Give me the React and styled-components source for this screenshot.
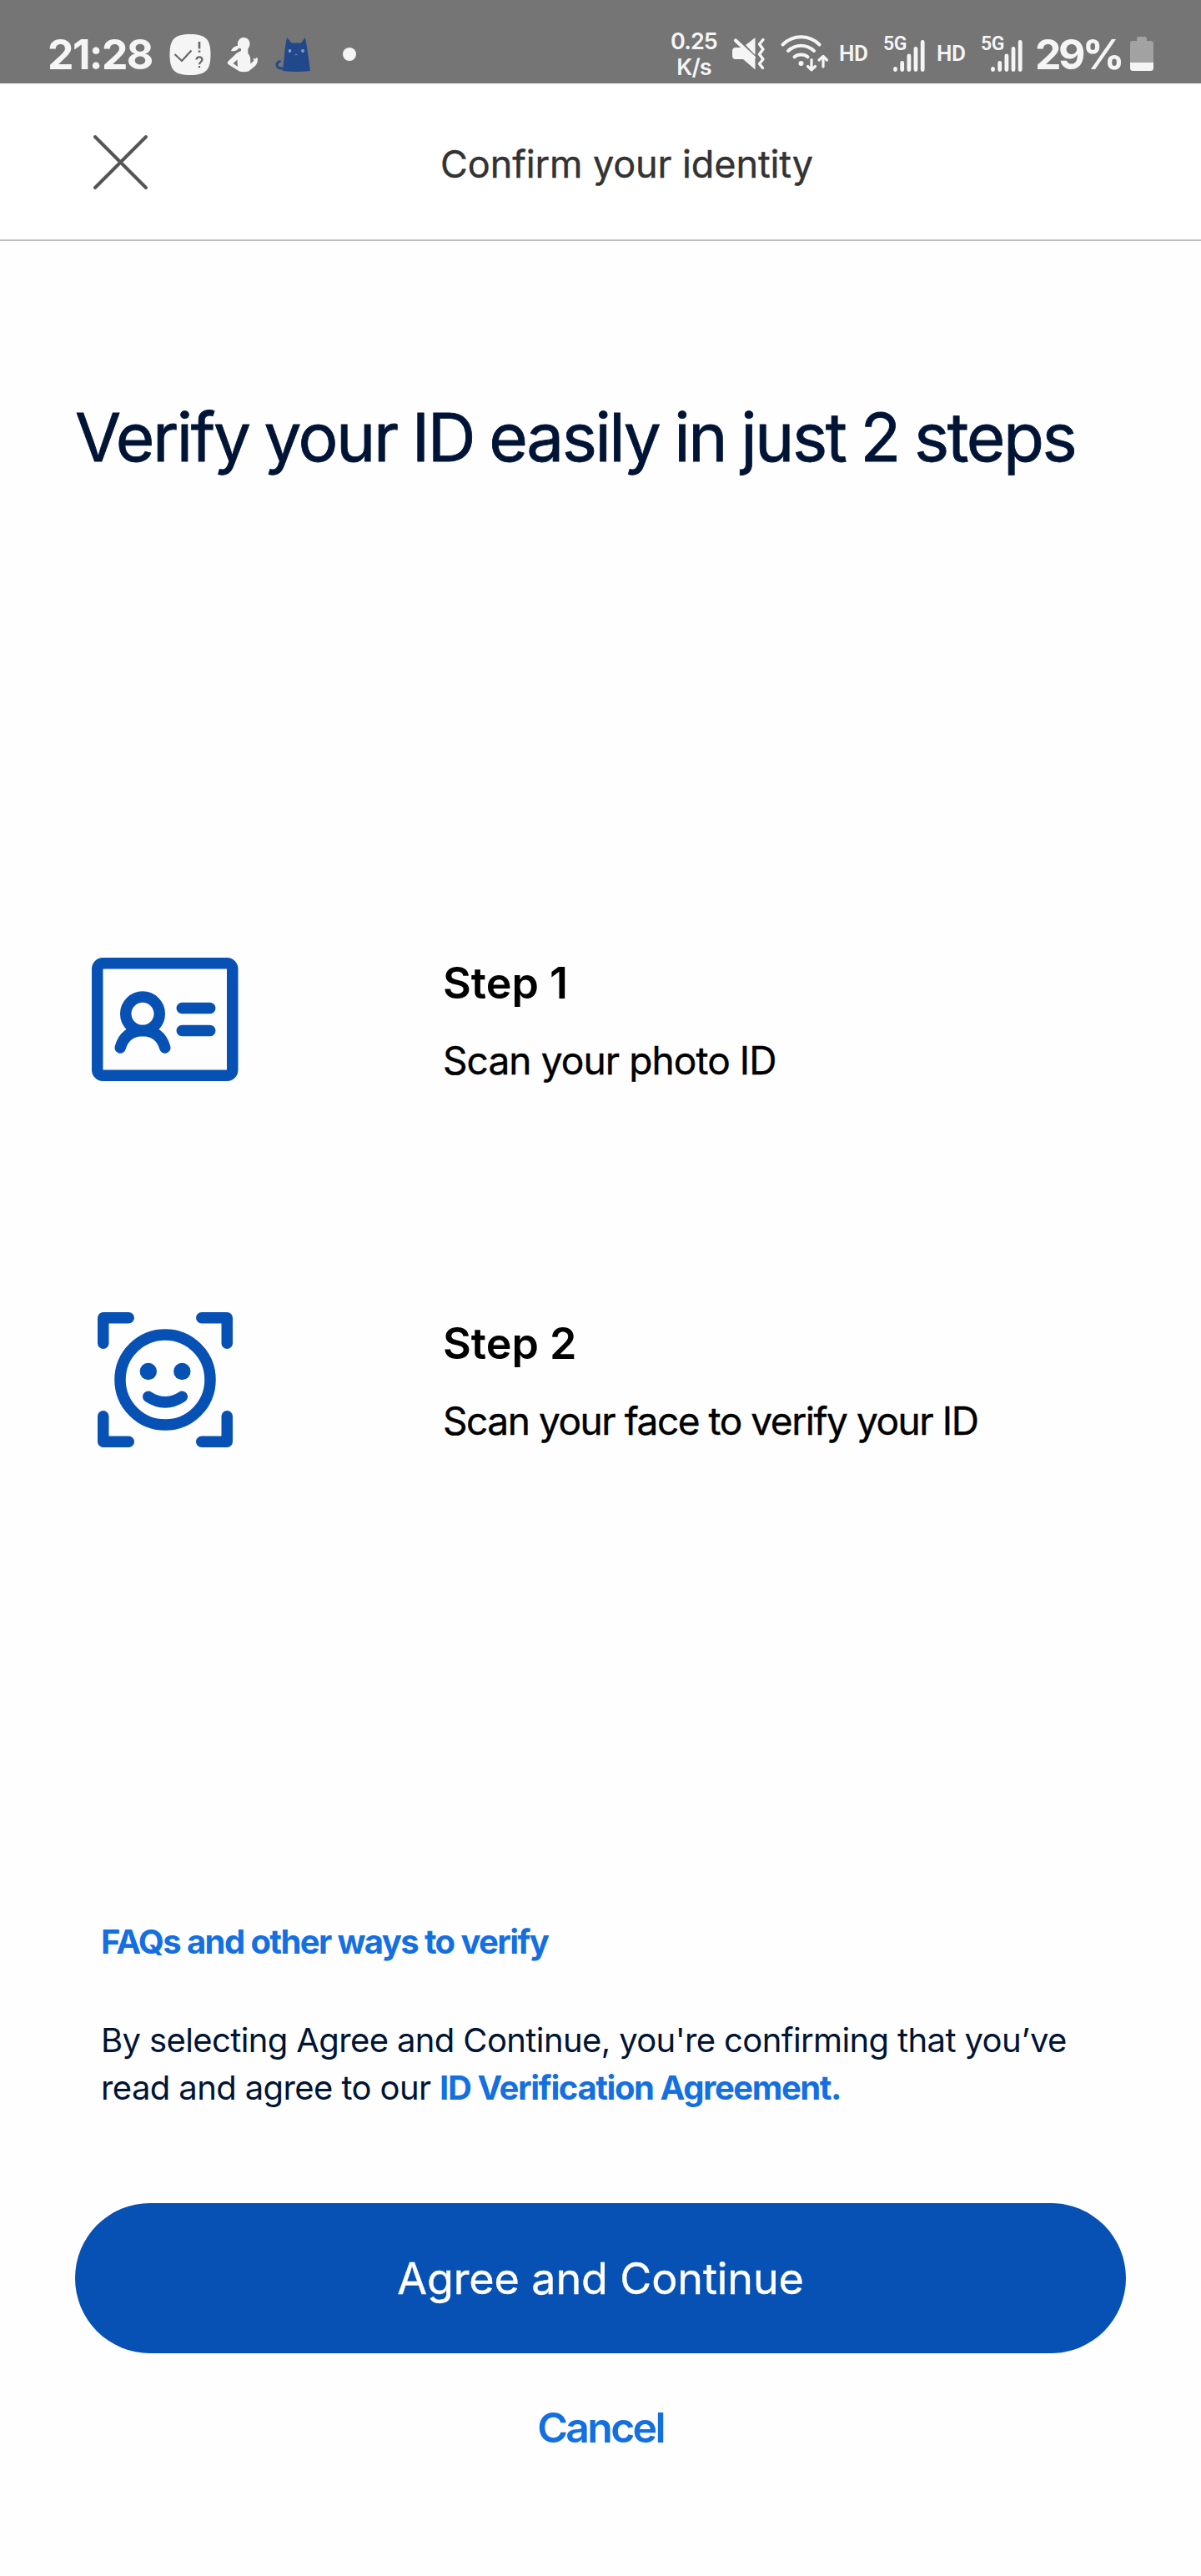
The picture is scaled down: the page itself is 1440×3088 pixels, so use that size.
import React from "react";
import styled, { createGlobalStyle } from "styled-components";

const Global = createGlobalStyle`
  * { box-sizing: border-box; }
  body { margin: 0; background: #fefefe; font-family: Inter, "Liberation Sans", sans-serif; font-kerning: normal; }
  h1, h2, p { margin: 0; }
  button { border: 0; background: none; padding: 0; font-family: inherit; cursor: pointer; }
  svg { display: block; flex: none; overflow: visible; }
`;

const Screen = styled.div`
  width: 1440px;
  height: 3088px;
  display: flex;
  flex-direction: column;
  background: #fefefe;
  overflow: hidden;
`;

const StatusBar = styled.header`
  height: 100px;
  flex: none;
  padding: 30px 57px 0 57px;
  background: #757575;
  color: #f5f5f5;
  display: flex;
  justify-content: space-between;
`;

const StatusGroup = styled.div`
  display: flex;
  align-items: flex-start;
  height: 70px;
`;

const StatusIcon = styled.svg`
  margin-left: ${(p) => p.$gap || 0}px;
`;

const StatusText = styled.span`
  width: ${(p) => p.$w}px;
  margin-left: ${(p) => p.$gap || 0}px;
  font-size: 50px;
  line-height: 70px;
  font-weight: 700;
  letter-spacing: ${(p) => p.$track || 0}px;
  white-space: nowrap;
`;

const Speed = styled.span`
  width: 60px;
  padding-top: 4px;
  display: flex;
  flex-direction: column;
  text-align: center;
  font-size: 27px;
  line-height: 31px;
  font-weight: 600;
  letter-spacing: -0.9px;
`;

const Hd = styled.span`
  width: 36px;
  margin-left: ${(p) => p.$gap}px;
  padding-top: 19px;
  font: 600 26px/30px Roboto, sans-serif;
  letter-spacing: -0.5px;
`;

const Network = styled.div`
  width: 50px;
  height: 60px;
  margin-left: ${(p) => p.$gap}px;
  display: flex;
  align-items: flex-start;
  padding-top: 14px;
  font: 600 23px/17px Roboto, sans-serif;
  letter-spacing: -0.5px;
`;

const Generation = styled.span`
  width: 12px;
  white-space: nowrap;
`;

const NavBar = styled.nav`
  height: 189px;
  flex: none;
  padding: 0 111px;
  display: grid;
  grid-template-columns: 67px 1fr 4px;
  background: #fff;
  border-bottom: 2px solid #bdbdbd;
`;

const CloseButton = styled.button`
  align-self: start;
  margin-top: 61px;
  height: 67px;
`;

const NavTitle = styled.span`
  text-align: center;
  padding-top: 67px;
  font-size: 45px;
  line-height: 60px;
  color: #333;
  letter-spacing: ${(p) => p.$track}px;
  -webkit-text-stroke: 0.4px currentColor;
`;

const Content = styled.main`
  flex: 1;
  padding: 0 90px;
  display: flex;
  flex-direction: column;
`;

const Heading = styled.h1`
  padding-top: 185px;
  height: 858px;
  font-size: 80px;
  line-height: 100px;
  font-weight: 400;
  color: #001435;
  white-space: nowrap;
  letter-spacing: ${(p) => p.$track}px;
  word-spacing: -2px;
  -webkit-text-stroke: 0.8px currentColor;
`;

const Step = styled.section`
  height: 432px;
  display: grid;
  grid-template-columns: 441px 1fr;
`;

const StepCopy = styled.div`
  padding-top: 1px;
  color: #000;
  white-space: nowrap;
`;

const StepName = styled.h2`
  font-size: 52px;
  line-height: 62px;
  font-weight: 600;
  letter-spacing: ${(p) => p.$track}px;
`;

const StepText = styled.p`
  margin-top: 30px;
  font-size: 46px;
  line-height: 62px;
  letter-spacing: ${(p) => p.$track}px;
  -webkit-text-stroke: 0.4px currentColor;
`;

const StepIcon = styled.svg`
  margin-left: 18px;
  margin-top: ${(p) => p.$shift || 0}px;
`;

const Legal = styled.section`
  padding: 288px 0 0 31px;
  height: 630px;
  font-size: 40px;
  line-height: 57px;
  color: #001435;
  white-space: nowrap;
`;

const Link = styled.a`
  color: #146fe1;
  font-weight: 700;
  letter-spacing: ${(p) => p.$track}px;
`;

const Terms = styled.p`
  margin-top: 61px;
`;

const Line = styled.span`
  display: block;
  letter-spacing: ${(p) => p.$track}px;
`;

const PrimaryButton = styled.button`
  height: 180px;
  flex: none;
  padding-top: 2px;
  border-radius: 90px;
  background: #0751b5;
  color: #fff;
  font-size: 52px;
  line-height: 64px;
  letter-spacing: ${(p) => p.$track}px;
  -webkit-text-stroke: 0.4px currentColor;
`;

const CancelButton = styled.button`
  align-self: center;
  margin-top: 57px;
  color: #146fe1;
  font-size: 50px;
  line-height: 64px;
  font-weight: 600;
  letter-spacing: ${(p) => p.$track}px;
`;

function TaskIcon() {
  return (
    <StatusIcon width="50" height="70" viewBox="202.5 30 50 70" $gap={16}>
      <path d="M227.500 41C246 41 252 47 252 65.500S246 90 227.500 90S203 84 203 65.500S209 41 227.500 41Z" fill="#f5f5f5" />
      <g fill="none" stroke="#666" strokeWidth="2.2">
        <path d="M209 65l8.500 8L229 60.500" />
        <path d="M238.500 50v8.500M238.500 60.500v2.300" strokeWidth="2.6" />
        <path d="M235 71.500q.3-3.200 3.500-3.200t3.500 3c0 3-3.500 2.600-3.500 6M238.500 79v2.300" />
      </g>
    </StatusIcon>
  );
}

function PersonIcon() {
  return (
    <StatusIcon width="38" height="70" viewBox="272 30 38 70" $gap={19}>
      <g fill="#f5f5f5">
        <path d="M285 52C285.500 47 289 44.800 292.500 45C297 45.300 299.700 49 299.500 53C299.300 56 298 57.500 297.300 58.500V64C299.500 66 300.300 69 300.300 72V76.500L304.500 72.500L303.500 70.500L305 69.500L306 71.500L307 69L309 70C309.200 74 308 77 306 79L298 85.500Q292 87 287 85.500L273.500 77C272.500 76 272.600 74.500 273.500 73.500L284 63.500L289 61V58.500L286.500 57.500C284 61.500 280.500 61.500 277 61C278.500 57.500 281.500 55 285 55Z" />
      </g>
      <path d="M284.500 71.500L279.500 76L285 80Z" fill="#757575" />
    </StatusIcon>
  );
}

function CatIcon() {
  return (
    <StatusIcon width="44" height="70" viewBox="329 30 44 70" $gap={19}>
      <path d="M338.500 82C331 82 330 76 335.500 73.500" fill="none" stroke="#20488a" strokeWidth="3" strokeLinecap="round" />
      <path d="M344 45L349.500 51.500H361L366 45L368 56L372 85Q356 87 339 85L342 56Z" fill="#20488a" />
      <g fill="#8ba0bd">
        <circle cx="347.500" cy="61" r="1.900" />
        <circle cx="363" cy="61" r="1.900" />
      </g>
      <path d="M353.500 66l1.500-1l1.500 1" fill="none" stroke="#8090b0" />
    </StatusIcon>
  );
}

function MuteIcon() {
  return (
    <StatusIcon width="40" height="70" viewBox="878 30 40 70" $gap={16}>
      <path d="M894 54L905.500 45V66Z" fill="#f5f5f5" />
      <path d="M878 61.500Q878 57 882 57H890L905.500 71.500V83.500L891 71H882Q878 71 878 67Z" fill="#f5f5f5" />
      <path d="M882 48.500L904 69" stroke="#f5f5f5" strokeWidth="4.200" strokeLinecap="round" />
      <path d="M915 47.500L910.500 53L915 59L910.500 65L915 71L910.500 76.500L914.500 81.500" fill="none" stroke="#f5f5f5" strokeWidth="3.400" strokeLinecap="round" strokeLinejoin="round" />
    </StatusIcon>
  );
}

function WifiIcon() {
  return (
    <StatusIcon width="58" height="70" viewBox="936 30 58 70" $gap={18}>
      <g fill="none" stroke="#f5f5f5" strokeWidth="4" strokeLinecap="round" strokeLinejoin="round">
        <path d="M938.500 53.500C951 41.300 970 41.300 982.500 53.500" />
        <path d="M945 61C954 52.800 967 52.800 976 61" />
        <path d="M952.500 68.300C957 64.500 964 64.500 968.500 68.300" />
        <path d="M973 71.500V83.500M968.500 79.500L973 83.800L977.500 79.500M987 80V68M982 72L987 67.500L991.500 72" strokeWidth="3.200" />
      </g>
      <circle cx="960.500" cy="76" r="3" fill="#f5f5f5" />
    </StatusIcon>
  );
}

function CellSignal({ gap }) {
  return (
    <Network $gap={gap}>
      <Generation>5G</Generation>
      <svg width="38" height="40" viewBox="1071 44 38 40">
        <g stroke="#f5f5f5" strokeWidth="4.800" strokeLinecap="round">
          <path d="M1073.500 82.500v1M1081.700 75.500v8M1089.900 67v16.500M1098 58.500v25M1106.200 50.500v33" />
        </g>
      </svg>
    </Network>
  );
}

function BatteryIcon() {
  return (
    <StatusIcon width="28" height="70" viewBox="1355 30 28 70" $gap={9}>
      <path d="M1363 49V46Q1363 44 1365 44H1373Q1375 44 1375 46V49H1380Q1383 49 1383 52V75H1355V52Q1355 49 1358 49Z" fill="#a2a2a2" />
      <path d="M1355 75H1383V81.500Q1383 85 1379.500 85H1358.500Q1355 85 1355 81.500Z" fill="#f5f5f5" />
    </StatusIcon>
  );
}

function IdCardIcon() {
  return (
    <StepIcon width="180" height="150" viewBox="108 1147 180 150">
      <g fill="none" stroke="#0751b5" strokeWidth="13.500" strokeLinecap="round">
        <rect x="116.750" y="1154.750" width="162" height="134.500" rx="6.500" />
        <circle cx="171" cy="1215.300" r="20.250" />
        <path d="M144.200 1256C148 1242 157.500 1235.500 171 1235.500S194 1242 197.800 1256" />
        <path d="M218.250 1208.500H251.750M218.250 1235.500H251.750" />
      </g>
    </StepIcon>
  );
}

function FaceScanIcon() {
  return (
    <StepIcon width="180" height="164" viewBox="108 1573 180 164" $shift={-6}>
      <g fill="none" stroke="#0751b5" strokeWidth="13.500" strokeLinecap="round" strokeLinejoin="round">
        <path d="M154.250 1579.750H123.750V1610.250M241.750 1579.750H272.250V1610.250M154.250 1728.250H123.750V1697.750M241.750 1728.250H272.250V1697.750" />
        <circle cx="198" cy="1654" r="54" />
        <path d="M177.800 1674.300Q198 1687.500 218.300 1674.300" />
        <g fill="#0751b5" stroke="none">
          <circle cx="177.800" cy="1644" r="10.200" />
          <circle cx="218.300" cy="1644" r="10.200" />
        </g>
      </g>
    </StepIcon>
  );
}

export default function App() {
  return (
    <>
      <Global />
      <Screen>
        <StatusBar>
          <StatusGroup>
            <StatusText $w={130} $track={-1.6}>21:28</StatusText>
            <TaskIcon />
            <PersonIcon />
            <CatIcon />
            <StatusIcon width="16" height="70" $gap={38}>
              <circle cx="8" cy="35" r="8" fill="#f5f5f5" />
            </StatusIcon>
          </StatusGroup>
          <StatusGroup>
            <Speed>
              <span>0.25</span>
              <span>K/s</span>
            </Speed>
            <MuteIcon />
            <WifiIcon />
            <Hd $gap={12}>HD</Hd>
            <CellSignal gap={17} />
            <Hd $gap={14}>HD</Hd>
            <CellSignal gap={17} />
            <StatusText $w={105} $gap={15} $track={-3.6}>29%</StatusText>
            <BatteryIcon />
          </StatusGroup>
        </StatusBar>
        <NavBar>
          <CloseButton aria-label="Close">
            <svg width="67" height="67" viewBox="111 161 67 67">
              <path d="M114 164L175 225M175 164L114 225" stroke="#555" strokeWidth="4" strokeLinecap="round" />
            </svg>
          </CloseButton>
          <NavTitle $track={-0.1}>Confirm your identity</NavTitle>
        </NavBar>
        <Content>
          <Heading $track={-2.43}>Verify your ID easily in just 2 steps</Heading>
          <Step>
            <IdCardIcon />
            <StepCopy>
              <StepName $track={0}>Step 1</StepName>
              <StepText $track={-0.9}>Scan your photo ID</StepText>
            </StepCopy>
          </Step>
          <Step>
            <FaceScanIcon />
            <StepCopy>
              <StepName $track={0}>Step 2</StepName>
              <StepText $track={-1.45}>Scan your face to verify your ID</StepText>
            </StepCopy>
          </Step>
          <Legal>
            <Link $track={-1.6}>FAQs and other ways to verify</Link>
            <Terms>
              <Line $track={-0.62}>By selecting Agree and Continue, you're confirming that you’ve</Line>
              <Line $track={-0.6}>
                read and agree to our <Link $track={-1.4}>ID Verification Agreement.</Link>
              </Line>
            </Terms>
          </Legal>
          <PrimaryButton $track={-0.1}>Agree and Continue</PrimaryButton>
          <CancelButton $track={-2.7}>Cancel</CancelButton>
        </Content>
      </Screen>
    </>
  );
}
